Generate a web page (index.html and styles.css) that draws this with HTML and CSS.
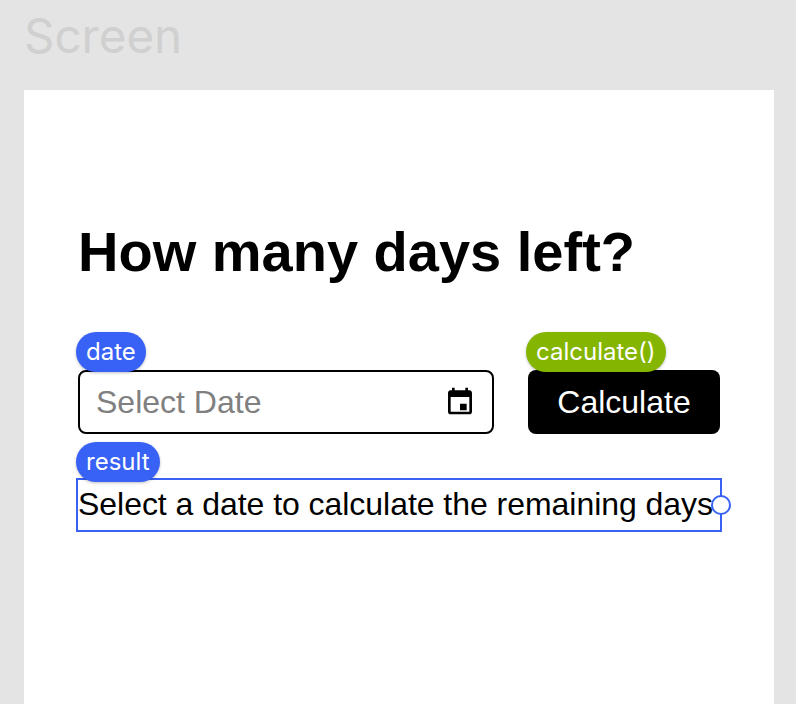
FILE: index.html
```html
<!DOCTYPE html>
<html lang="en">
<head>
  <meta charset="UTF-8" />
  <meta name="viewport" content="width=device-width, initial-scale=1.0" />
  <title>Screen</title>
  <link rel="stylesheet" href="styles.css">
</head>
<body>

  <div class="screen-label">Screen</div>

  <div class="screen">
    <h1>How many days left?</h1>

    <div class="form-row">
      <div class="date-wrap">
        <span class="tag">date</span>
        <div class="date-input">
          <span class="placeholder">Select Date</span>
          <svg class="calendar" viewBox="0 0 24 24" width="32" height="32">
            <path d="M19 4h-1V2h-2v2H8V2H6v2H5c-1.100 0-2 .9-2 2v14c0 1.100.9 2 2 2h14c1.100 0 2-.9 2-2V6c0-1.100-.9-2-2-2zm0 16H5V9h14v11zm-2-6h-5v5h5v-5z" fill="#000"/>
          </svg>
        </div>
      </div>
      <div class="button-wrap">
        <span class="tag tag-green">calculate()</span>
        <button class="calc-button">Calculate</button>
      </div>
    </div>

    <div class="result-wrap">
      <span class="tag tag-result">result</span>
      <div class="result">
        Select a date to calculate the remaining days
        <span class="handle"></span>
      </div>
    </div>
  </div>

</body>
</html>
```

FILE: styles.css
```css
html, body {
  height: 100%;
}
body {
  margin: 0;
  background: #e4e4e4;
  font-family: "Liberation Sans", Arial, sans-serif;
  overflow: hidden;
}
.screen-label {
  font-family: Inter, sans-serif;
  font-size: 47.5px;
  line-height: 71px;
  height: 90px;
  padding-left: 24px;
  color: #d0d0d0;
}
.screen {
  width: 750px;
  height: 614px;
  margin-left: 24px;
  box-sizing: border-box;
  background: white;
  padding: 130px 52px 0 52px;
}
h1 {
  margin: 0 0 86px 2px;
  font-size: 56px;
  line-height: 64px;
  font-weight: bold;
  color: black;
}
.form-row {
  display: flex;
  justify-content: space-between;
  padding: 0 2px;
}
.date-wrap, .button-wrap, .result-wrap {
  position: relative;
}
.tag {
  position: absolute;
  left: -2px;
  top: -38px;
  height: 40px;
  padding: 0 10px;
  border-radius: 20px;
  background: #3861f6;
  color: white;
  font-family: Inter, sans-serif;
  font-size: 24px;
  line-height: 39px;
  box-shadow: 0 1px 3px rgba(0,0,0,0.25);
  z-index: 2;
}
.tag-green {
  background: #84b500;
}
.tag-result {
  left: 0;
  top: -36px;
}
.date-input {
  width: 416px;
  height: 64px;
  box-sizing: border-box;
  border: 2px solid black;
  border-radius: 8px;
  display: flex;
  align-items: center;
  justify-content: space-between;
  padding: 0 16px;
  font-size: 32px;
}
.placeholder {
  color: #808080;
}
.calendar {
  display: block;
  margin-top: -3px;
}
.calc-button {
  display: block;
  width: 192px;
  height: 64px;
  background: black;
  color: white;
  border: none;
  border-radius: 8px;
  font-family: inherit;
  font-size: 32px;
  padding: 0;
}
.result-wrap {
  margin-top: 44px;
}
.result {
  position: relative;
  height: 54px;
  box-sizing: border-box;
  border: 2px solid #3861f6;
  font-size: 32px;
  line-height: 48px;
  color: black;
  white-space: nowrap;
  letter-spacing: -0.04px;
}
.handle {
  position: absolute;
  right: -11px;
  top: 15px;
  width: 20px;
  height: 20px;
  box-sizing: border-box;
  border: 2px solid #3861f6;
  border-radius: 50%;
  background: white;
}
```
